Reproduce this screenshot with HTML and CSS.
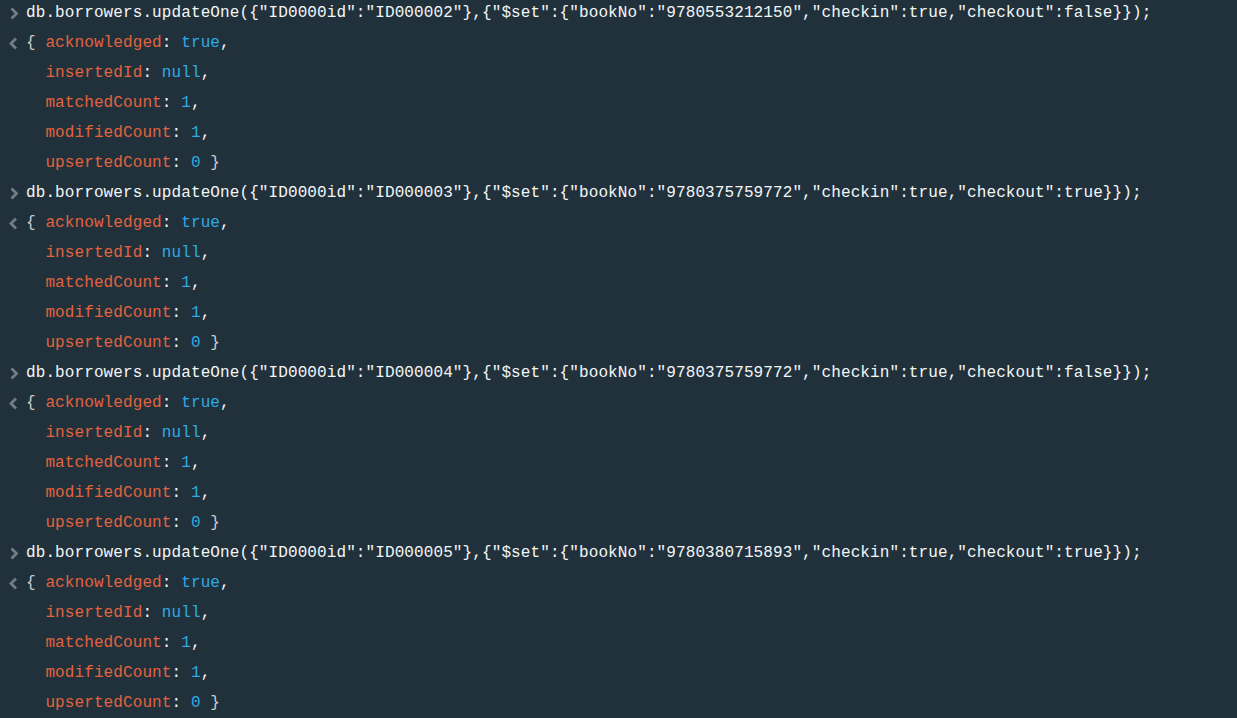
FILE: index.html
```html
<!DOCTYPE html>
<html>
<head>
<meta charset="utf-8">
<link rel="stylesheet" href="styles.css">
</head>
<body>
<div class="shell">
  <div class="line input"><span class="gutter"><svg class="chev" viewBox="0 0 10 13"><path d="M2.5 1.5 L7.5 6.5 L2.5 11.5"/></svg></span><span class="code">db.borrowers.updateOne({"ID0000id":"ID000002"},{"$set":{"bookNo":"9780553212150","checkin":true,"checkout":false}});</span></div>
  <div class="line output"><span class="gutter"><svg class="chev" viewBox="0 0 10 13"><path d="M7 1.5 L2 6.5 L7 11.5"/></svg></span><span class="code"><span class="brace">{ </span><span class="key">acknowledged</span>: <span class="val">true</span>,</span></div>
  <div class="line"><span class="gutter"></span><span class="code indent"><span class="key">insertedId</span>: <span class="val">null</span>,</span></div>
  <div class="line"><span class="gutter"></span><span class="code indent"><span class="key">matchedCount</span>: <span class="val">1</span>,</span></div>
  <div class="line"><span class="gutter"></span><span class="code indent"><span class="key">modifiedCount</span>: <span class="val">1</span>,</span></div>
  <div class="line"><span class="gutter"></span><span class="code indent"><span class="key">upsertedCount</span>: <span class="val">0</span> <span class="brace">}</span></span></div>

  <div class="line input"><span class="gutter"><svg class="chev" viewBox="0 0 10 13"><path d="M2.5 1.5 L7.5 6.5 L2.5 11.5"/></svg></span><span class="code">db.borrowers.updateOne({"ID0000id":"ID000003"},{"$set":{"bookNo":"9780375759772","checkin":true,"checkout":true}});</span></div>
  <div class="line output"><span class="gutter"><svg class="chev" viewBox="0 0 10 13"><path d="M7 1.5 L2 6.5 L7 11.5"/></svg></span><span class="code"><span class="brace">{ </span><span class="key">acknowledged</span>: <span class="val">true</span>,</span></div>
  <div class="line"><span class="gutter"></span><span class="code indent"><span class="key">insertedId</span>: <span class="val">null</span>,</span></div>
  <div class="line"><span class="gutter"></span><span class="code indent"><span class="key">matchedCount</span>: <span class="val">1</span>,</span></div>
  <div class="line"><span class="gutter"></span><span class="code indent"><span class="key">modifiedCount</span>: <span class="val">1</span>,</span></div>
  <div class="line"><span class="gutter"></span><span class="code indent"><span class="key">upsertedCount</span>: <span class="val">0</span> <span class="brace">}</span></span></div>

  <div class="line input"><span class="gutter"><svg class="chev" viewBox="0 0 10 13"><path d="M2.5 1.5 L7.5 6.5 L2.5 11.5"/></svg></span><span class="code">db.borrowers.updateOne({"ID0000id":"ID000004"},{"$set":{"bookNo":"9780375759772","checkin":true,"checkout":false}});</span></div>
  <div class="line output"><span class="gutter"><svg class="chev" viewBox="0 0 10 13"><path d="M7 1.5 L2 6.5 L7 11.5"/></svg></span><span class="code"><span class="brace">{ </span><span class="key">acknowledged</span>: <span class="val">true</span>,</span></div>
  <div class="line"><span class="gutter"></span><span class="code indent"><span class="key">insertedId</span>: <span class="val">null</span>,</span></div>
  <div class="line"><span class="gutter"></span><span class="code indent"><span class="key">matchedCount</span>: <span class="val">1</span>,</span></div>
  <div class="line"><span class="gutter"></span><span class="code indent"><span class="key">modifiedCount</span>: <span class="val">1</span>,</span></div>
  <div class="line"><span class="gutter"></span><span class="code indent"><span class="key">upsertedCount</span>: <span class="val">0</span> <span class="brace">}</span></span></div>

  <div class="line input"><span class="gutter"><svg class="chev" viewBox="0 0 10 13"><path d="M2.5 1.5 L7.5 6.5 L2.5 11.5"/></svg></span><span class="code">db.borrowers.updateOne({"ID0000id":"ID000005"},{"$set":{"bookNo":"9780380715893","checkin":true,"checkout":true}});</span></div>
  <div class="line output"><span class="gutter"><svg class="chev" viewBox="0 0 10 13"><path d="M7 1.5 L2 6.5 L7 11.5"/></svg></span><span class="code"><span class="brace">{ </span><span class="key">acknowledged</span>: <span class="val">true</span>,</span></div>
  <div class="line"><span class="gutter"></span><span class="code indent"><span class="key">insertedId</span>: <span class="val">null</span>,</span></div>
  <div class="line"><span class="gutter"></span><span class="code indent"><span class="key">matchedCount</span>: <span class="val">1</span>,</span></div>
  <div class="line"><span class="gutter"></span><span class="code indent"><span class="key">modifiedCount</span>: <span class="val">1</span>,</span></div>
  <div class="line"><span class="gutter"></span><span class="code indent"><span class="key">upsertedCount</span>: <span class="val">0</span> <span class="brace">}</span></span></div>
</div>
</body>
</html>
```

FILE: styles.css
```css
html, body {
  margin: 0;
  padding: 0;
  background: #21313c;
  height: 100%;
  overflow: hidden;
}
.shell {
  display: flex;
  flex-direction: column;
  margin-top: -2px;
  font-family: "Liberation Mono", "Courier New", monospace;
  font-size: 16px;
  color: #f4f6f6;
  letter-spacing: 0.1px;
}
.line {
  display: flex;
  align-items: center;
  height: 30px;
  line-height: 30px;
  white-space: pre;
}
.code { padding-left: 1px; }
.gutter {
  width: 25px;
  flex: none;
  display: flex;
  align-items: center;
  padding-left: 9px;
  box-sizing: border-box;
}
.chev {
  display: block;
  width: 10px;
  height: 13px;
  fill: none;
  stroke: #727d85;
  stroke-width: 2.8;
}
.indent { padding-left: 20.4px; }
.key { color: #e2633d; }
.val { color: #2eaae4; }
.brace { color: #c5cdd3; }
```
